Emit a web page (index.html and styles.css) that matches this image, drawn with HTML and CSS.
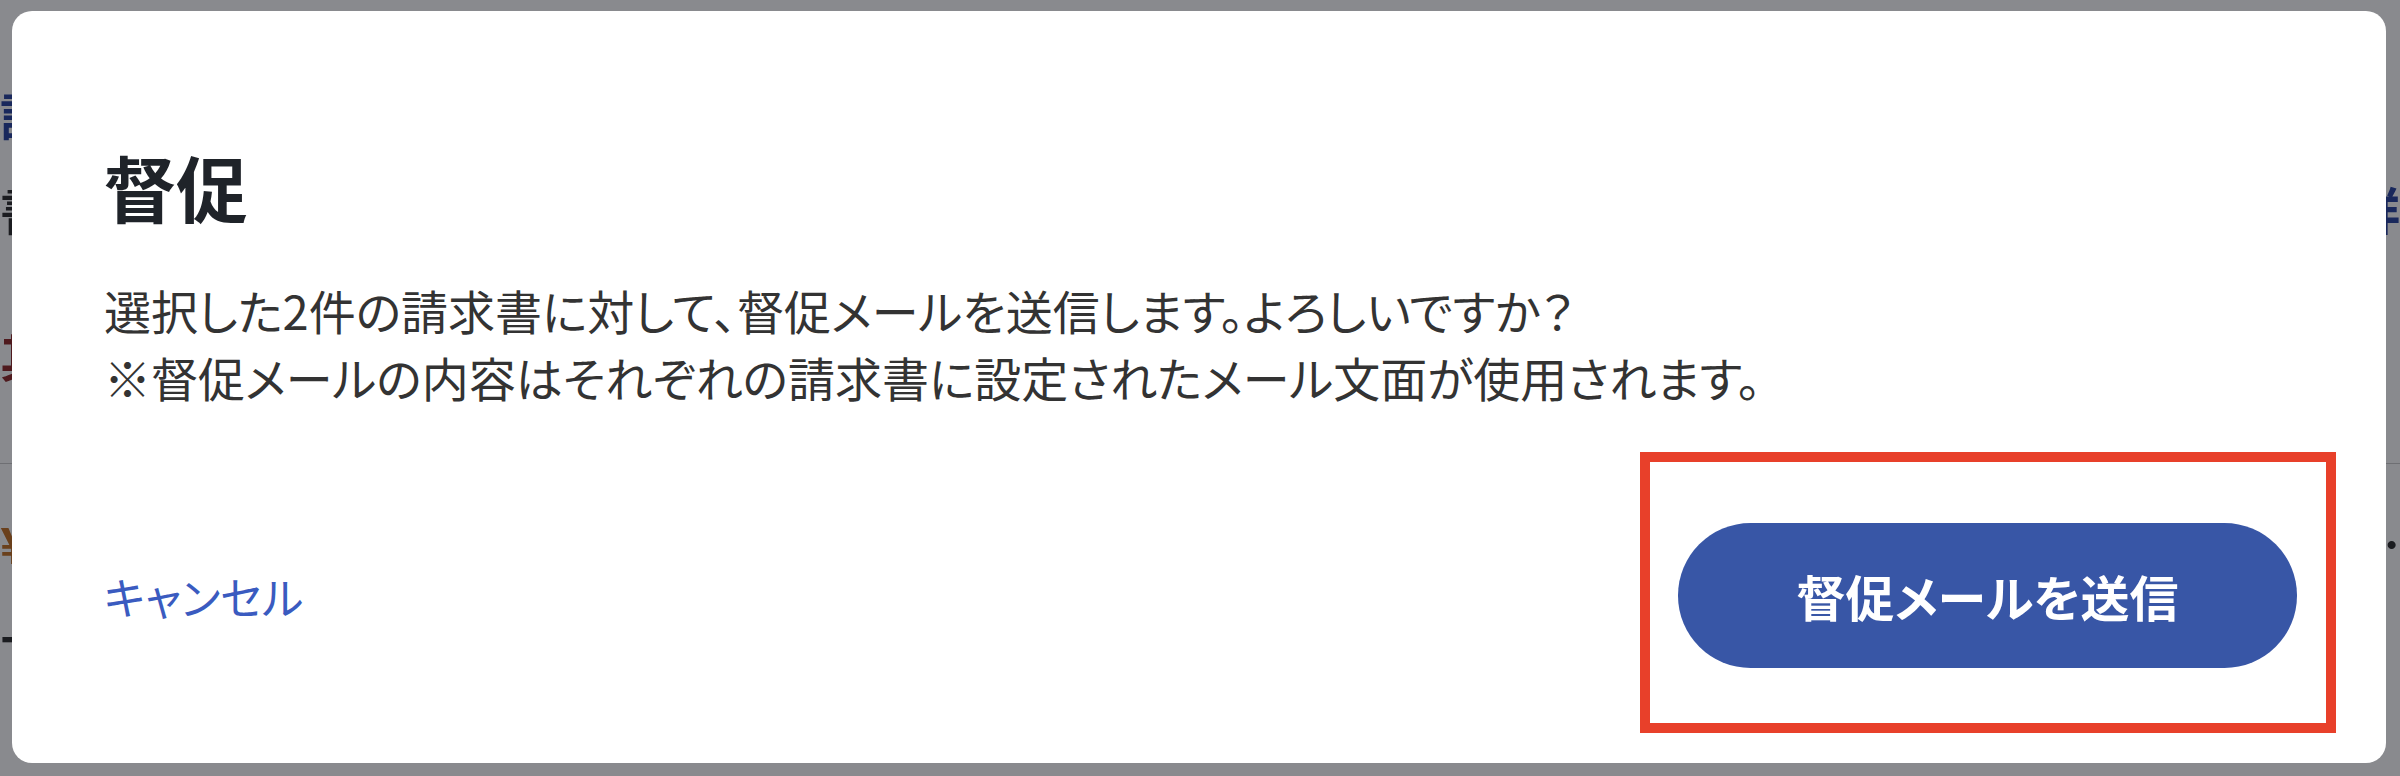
FILE: index.html
```html
<!DOCTYPE html>
<html lang="ja">
<head>
<meta charset="utf-8">
<title>督促</title>
<link rel="stylesheet" href="styles.css">
</head>
<body>
<div class="page">
  <div class="page-row row-1"><span class="frag blue">請</span></div>
  <div class="page-row row-2"><span class="frag dark">書</span><span class="frag blue">詳</span></div>
  <div class="page-row row-3"><span class="frag red">其</span></div>
  <div class="page-row row-4"><span class="frag orange">¥</span><span class="frag dark">…</span></div>
  <div class="page-row row-5"><span class="frag dark">-</span></div>
</div>
<div class="overlay">
  <div class="dialog">
    <h2 class="title">督促</h2>
    <p class="message">選択した2件の請求書に対して、督促メールを送信します。よろしいですか？<br>※督促メールの内容はそれぞれの請求書に設定されたメール文面が使用されます。</p>
    <div class="footer">
      <a class="cancel" href="#">キャンセル</a>
      <div class="highlight">
        <button class="primary" type="button">督促メールを送信</button>
      </div>
    </div>
  </div>
</div>
</body>
</html>
```
FILE: styles.css
```css
html, body {
  margin: 0;
  padding: 0;
}

body {
  width: 2400px;
  height: 776px;
  overflow: hidden;
  font-family: "Noto Sans CJK JP", "Noto Sans", sans-serif;
  background: #ffffff;
}

/* page behind the modal */
.page {
  display: flex;
  flex-direction: column;
  padding-top: 84px;
  height: 776px;
  box-sizing: border-box;
}

.page-row {
  display: flex;
  justify-content: space-between;
  align-items: center;
}

.row-1 { height: 60px; }
.row-2 { height: 60px; margin-top: 34px; }
.row-3 { height: 66px; margin-top: 84px; border-bottom: 1px solid #c8c8c8; padding-bottom: 75px; }
.row-4 { height: 50px; margin-top: 53px; }
.row-5 { height: 30px; margin-top: 50px; }

.frag {
  font-size: 50px;
  line-height: 60px;
  font-weight: 700;
}

.blue { color: #1f3a9a; }
.dark { color: #222222; }
.red { color: #8a1f1f; }
.orange { color: #c06a1a; }

/* modal */
.overlay {
  position: fixed;
  inset: 0;
  display: flex;
  padding: 11px 14px 13px 12px;
  box-sizing: border-box;
  background: rgba(20, 22, 30, 0.5);
}

.dialog {
  flex: 1;
  display: flex;
  flex-direction: column;
  background: #ffffff;
  border-radius: 20px;
  padding: 139px 50px 30px 92px;
  box-sizing: border-box;
  font-feature-settings: "palt";
}

.title {
  margin: 0 0 54px;
  font-size: 72px;
  line-height: 72px;
  font-weight: 700;
  color: #1f2329;
}

.message {
  margin: 0 0 42px;
  font-size: 47px;
  line-height: 67px;
  color: #333333;
}

.footer {
  display: flex;
  justify-content: space-between;
  align-items: center;
}

.cancel {
  margin-top: 7px;
  font-size: 44px;
  line-height: 60px;
  color: #3a5bc0;
  text-decoration: none;
}

.highlight {
  border: 10px solid #e8402a;
  padding: 61px 29px 55px 28px;
}

.primary {
  display: block;
  width: 619px;
  height: 145px;
  border: none;
  border-radius: 73px;
  background: #3856a6;
  color: #ffffff;
  font-family: "Noto Sans CJK JP", "Noto Sans", sans-serif;
  font-feature-settings: "palt";
  font-size: 49px;
  font-weight: 700;
  line-height: 1;
  padding: 0;
}
```
